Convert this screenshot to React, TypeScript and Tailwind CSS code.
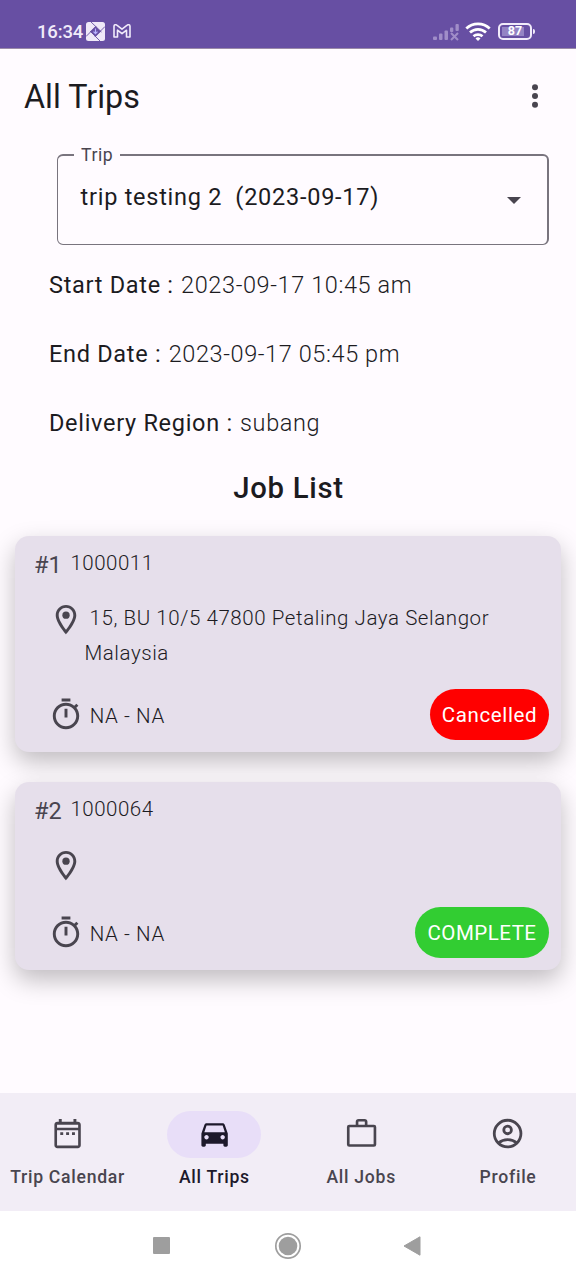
import React from "react";

type IconProps = { className?: string };

function PinIcon() {
  return (
    <svg viewBox="0 0 24 24" className="h-[35.2px] w-[36px] shrink-0" fill="#49454f">
      <path d="M12 2C8.13 2 5 5.13 5 9c0 5.25 7 13 7 13s7-7.75 7-13c0-3.87-3.13-7-7-7zM7 9c0-2.76 2.24-5 5-5s5 2.24 5 5c0 2.88-2.88 7.19-5 9.88C9.92 16.21 7 11.85 7 9z" />
      <circle cx="12" cy="9" r="2.5" />
    </svg>
  );
}

function TimerIcon() {
  return (
    <svg viewBox="0 0 24 24" className="mt-[2px] h-[35.2px] w-[36px] shrink-0" fill="#49454f">
      <path d="M9 1h6v2H9zM11 8h2v6h-2z" />
      <path d="M19.03 7.39l1.42-1.42c-.43-.51-.9-.99-1.41-1.41l-1.42 1.42C16.07 4.74 14.12 4 12 4c-4.97 0-9 4.03-9 9s4.02 9 9 9 9-4.03 9-9c0-2.12-.74-4.07-1.97-5.61zM12 20c-3.87 0-7-3.13-7-7s3.13-7 7-7 7 3.13 7 7-3.13 7-7 7z" />
    </svg>
  );
}

function CalendarIcon({ className }: IconProps) {
  return (
    <svg viewBox="0 0 24 24" className={className} fill="currentColor">
      <path d="M19 4h-1V2h-2v2H8V2H6v2H5c-1.1 0-2 .9-2 2v14c0 1.1.9 2 2 2h14c1.1 0 2-.9 2-2V6c0-1.1-.9-2-2-2zM4.800 20.200V9.800h14.400V20.200H4.800zM4.800 8V5.900h14.400V8z" />
      <path d="M7 11h2v2H7zM11 11h2v2h-2zM15 11h2v2h-2z" />
    </svg>
  );
}

function CarIcon({ className }: IconProps) {
  return (
    <svg viewBox="0 0 24 24" className={className} fill="currentColor">
      <path d="M18.92 6.010C18.720 5.420 18.160 5 17.500 5h-11c-.66 0-1.210.42-1.420 1.010L3 12v8c0 .55.45 1 1 1h1c.55 0 1-.45 1-1v-1h12v1c0 .55.45 1 1 1h1c.55 0 1-.45 1-1v-8l-2.080-5.990zM6.500 16c-.83 0-1.500-.67-1.500-1.500S5.670 13 6.500 13s1.500.67 1.500 1.500S7.330 16 6.500 16zm11 0c-.83 0-1.500-.67-1.500-1.500s.67-1.500 1.500-1.500 1.500.67 1.500 1.500-.67 1.500-1.500 1.500zM5 11l1.500-4.500h11L19 11H5z" />
    </svg>
  );
}

function WorkIcon({ className }: IconProps) {
  return (
    <svg viewBox="0 0 24 24" className={className} fill="none" stroke="currentColor" strokeWidth="1.8">
      <rect x="2.900" y="6.850" width="18.200" height="13.300" rx=".7" />
      <path d="M8.900 6.500V4q0-1.100 1.100-1.100h4q1.100 0 1.100 1.100v2.500" />
    </svg>
  );
}

function ProfileIcon({ className }: IconProps) {
  return (
    <svg viewBox="0 0 24 24" className={className} fill="none" stroke="currentColor" strokeWidth="1.900">
      <circle cx="12" cy="12" r="9.100" />
      <circle cx="12" cy="9.500" r="2.600" />
      <path d="M5.900 18.300C7.500 16.900 9.700 16.100 12 16.100s4.500.8 6.100 2.200" />
    </svg>
  );
}

function StatusBar() {
  return (
    <div className="flex h-[49px] items-start border-b border-[#9a8aa8] bg-[#674fa3] pl-[37px] pt-[21px] text-[#f1ebfa]">
      <span className="w-[49px] whitespace-nowrap text-[18.500px] font-medium leading-[22px] tracking-[-0.15px]">16:34</span>
      <svg viewBox="0 0 19 19" className="mt-px h-[19px] w-[19px]">
        <rect width="19" height="19" rx="2.500" fill="#efe9f8" />
        <path d="M9.500 4.200 14.800 9.500 9.500 14.800 4.200 9.500z" fill="#674fa3" />
        <path d="M5 0 15.500 10M19 4.500 9 14.500M14 19 4 9M0 14.500 10 4.500" stroke="#674fa3" strokeWidth=".9" />
        <path d="M9.500 6.500v5M7.500 9.700l2 2 2-2" fill="none" stroke="#b9b2ff" strokeWidth="1.200" />
      </svg>
      <svg viewBox="0 0 18 14" className="ml-[8px] mt-[3px] h-[14px] w-[18px]" fill="none" stroke="currentColor" strokeWidth="1.600" strokeLinejoin="round">
        <path d="M1 2.300C1 .8 2.700.3 3.800 1.200L9 5.200l5.200-4C15.300.3 17 .8 17 2.300V13h-3.500V6.200L9 9.700 4.500 6.200V13H1z" />
      </svg>
      <svg viewBox="0 0 26 17" className="ml-[302px] mt-[3px] h-[17px] w-[26px]" fill="#a08dc8">
        <rect x="0" y="12.500" width="4" height="3.500" rx="1" />
        <rect x="6" y="9.500" width="3.500" height="6.500" rx="1" />
        <rect x="11.500" y="6.500" width="3.500" height="9.500" rx="1" />
        <rect x="17" y="3.500" width="3.300" height="4.500" rx="1" />
        <rect x="22.500" y="0" width="3.300" height="7" rx="1" />
        <path d="m18 9 7 7m0-7-7 7" stroke="#a08dc8" strokeWidth="2" />
      </svg>
      <svg viewBox="0 0 26 19" className="ml-[6px] mt-px h-[19px] w-[26px]" fill="none" stroke="#fff" strokeWidth="2.700">
        <path d="M1.300 6.500a17 17 0 0 1 23.400 0M5 10.500a11.700 11.700 0 0 1 16 0M8.500 14.300a6.600 6.600 0 0 1 9 0" />
        <path d="m13 18.900-2.500-2.400a3.600 3.600 0 0 1 5 0z" fill="#fff" stroke="none" />
      </svg>
      <div className="ml-[7px] mt-[2px] flex h-[17px] w-[34px] items-center justify-center rounded-[5px] border-2 border-[#f1ebfa] p-[2px]">
        <div className="flex h-full w-full items-center justify-center bg-[linear-gradient(90deg,#9483c4_83%,#674fa3_83%)] text-[12.500px] font-bold leading-none text-white">87</div>
      </div>
      <div className="ml-px mt-[8px] h-[5px] w-[2px] rounded-r bg-[#f1ebfa]" />
    </div>
  );
}

function Detail({ label, value }: { label: string; value: string }) {
  return (
    <div className="flex h-[69px] items-center whitespace-pre text-[23.500px] leading-[35px] tracking-[0.700px]">
      <span>{label} : </span>
      <span className="ml-[0.800px] font-light tracking-[0.600px]">{value}</span>
    </div>
  );
}

type Job = { index: number; id: string; address: string[]; status: string };

const jobs: Job[] = [
  { index: 1, id: "1000011", address: ["15, BU 10/5 47800 Petaling Jaya Selangor", "Malaysia"], status: "Cancelled" },
  { index: 2, id: "1000064", address: [], status: "COMPLETE" },
];

function JobCard({ job }: { job: Job }) {
  const tall = job.address.length > 0;
  return (
    <div
      className={
        "flex flex-col rounded-[14px] bg-[#e6dfeb] shadow-[0_10px_24px_rgba(0,0,0,0.25)] " +
        (tall ? "h-[216px]" : "h-[188px]")
      }
    >
      <div className="flex h-[56px] items-start pl-[19px]">
        <span className="mt-[15px] w-[36.500px] text-[23.500px] leading-[28px] text-[#49454f]">#{job.index}</span>
        <span className="mt-[14px] text-[20.500px] font-light leading-[26px] tracking-[0.500px]">{job.id}</span>
      </div>
      <div className={"flex items-start pl-[33px] pt-[10px] " + (tall ? "h-[96px]" : "h-[68px]")}>
        <PinIcon />
        <div className="whitespace-nowrap text-[20.500px] font-light leading-[35px] tracking-[0.580px]">
          {job.address.map((line, i) => (
            <div key={line} className={i === 0 ? "-mt-px pl-[5.500px]" : "pl-[0.400px]"}>
              {line}
            </div>
          ))}
        </div>
      </div>
      <div className="flex h-[52px] items-center pl-[33px] pr-[12px]">
        <TimerIcon />
        <span className="ml-[5.700px] mt-[3px] text-[20.500px] font-light leading-[26px] tracking-[0.600px]">NA - NA</span>
        <span
          className={
            "ml-auto flex h-[51px] items-center justify-center rounded-full pt-[3px] text-[20.500px] text-white " +
            (tall ? "w-[119px] bg-[#ff0000] tracking-[0.650px]" : "w-[134px] bg-[#32cd32] tracking-[0.500px]")
          }
        >
          {job.status}
        </span>
      </div>
    </div>
  );
}

const tabs = [
  { label: "Trip Calendar", Icon: CalendarIcon, active: false },
  { label: "All Trips", Icon: CarIcon, active: true },
  { label: "All Jobs", Icon: WorkIcon, active: false },
  { label: "Profile", Icon: ProfileIcon, active: false },
];

export default function App() {
  return (
    <div className="flex h-[1280px] w-[576px] flex-col overflow-hidden bg-[#fffbff] font-['Roboto',sans-serif] text-[#1c1b1f]">
      <StatusBar />
      <header className="flex h-[96px] items-center justify-between pl-[24px] pr-[38px]">
        <h1 className="text-[32.300px] leading-[40px]">All Trips</h1>
        <svg viewBox="0 0 6 24" className="-mt-[3px] h-[24px] w-[6px]" fill="#49454f">
          <circle cx="3" cy="3.300" r="3" />
          <circle cx="3" cy="12" r="3" />
          <circle cx="3" cy="20.700" r="3" />
        </svg>
      </header>

      <main className="flex h-[948px] flex-col">
        <fieldset className="ml-[57px] mr-[27px] flex h-[100px] items-start justify-between rounded-[6px] border-b border-l border-r-2 border-t-2 border-[#79747e] pl-[22.600px] pr-[26px]">
          <legend className="-ml-[6.600px] h-[20px] px-[7px] text-[17.600px] leading-[20px] tracking-[0.590px] text-[#49454f]">Trip</legend>
          <span className="mt-[18px] whitespace-pre text-[23.500px] leading-[28px] tracking-[0.740px]">trip testing 2  (2023-09-17)</span>
          <svg viewBox="0 0 14 7" className="mt-[32px] h-[7px] w-[14px]" fill="#49454f">
            <path d="M0 0h14L7 7z" />
          </svg>
        </fieldset>
        <section className="mt-[6px] flex flex-col pl-[49px]">
          <Detail label="Start Date" value="2023-09-17 10:45 am" />
          <Detail label="End Date" value="2023-09-17 05:45 pm" />
          <Detail label="Delivery Region" value="subang" />
        </section>
        <h2 className="mt-[8px] pl-px text-center text-[29.300px] font-medium leading-[44px] tracking-[0.730px]">Job List</h2>
        <section className="mt-[26px] flex flex-col gap-[30px] pl-[15px] pr-[15px]">
          {jobs.map((job) => (
            <JobCard key={job.id} job={job} />
          ))}
        </section>
      </main>

      <nav className="flex h-[118px] gap-[11.700px] bg-[#f2edf6] pr-[0.400px]">
        {tabs.map(({ label, Icon, active }) => (
          <div key={label} className={"flex flex-1 flex-col items-center pt-[18px] " + (active ? "text-[#1d192b]" : "text-[#49454f]")}>
            <div className={"flex h-[47px] w-[94px] items-center justify-center rounded-full " + (active ? "bg-[#e8def8]" : "")}>
              <Icon className="-mt-px h-[35.200px] w-[35.200px]" />
            </div>
            <span className="mt-[7px] whitespace-nowrap text-[17.600px] font-medium leading-[24px] tracking-[0.730px]">{label}</span>
          </div>
        ))}
      </nav>

      <div className="flex h-[69px] items-center bg-white pl-[153px]">
        <div className="h-[17px] w-[17px] rounded-[1px] bg-[#9e9e9e]" />
        <svg viewBox="0 0 28 28" className="ml-[104px] h-[28px] w-[28px]">
          <circle cx="14" cy="14" r="12.200" fill="none" stroke="#9e9e9e" strokeWidth="1.700" />
          <circle cx="14" cy="14" r="9.300" fill="#9e9e9e" />
        </svg>
        <svg viewBox="0 0 18 20" className="ml-[101px] h-[20px] w-[18px]" fill="#9e9e9e">
          <path d="M1 10 17 .8v18.400z" stroke="#9e9e9e" strokeLinejoin="round" />
        </svg>
      </div>
    </div>
  );
}
